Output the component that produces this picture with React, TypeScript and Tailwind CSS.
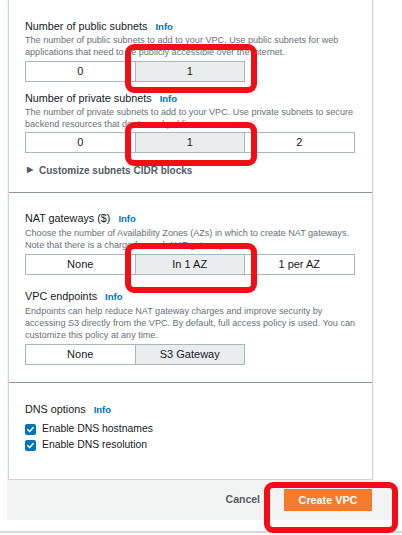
import React from 'react';

const font = { fontFamily: '"Liberation Sans", Arial, sans-serif' };

const Info = () => (
  <span className="ml-[8px] text-[9.5px] font-bold text-[#0073bb]">Info</span>
);

const Label = ({ children }: { children: React.ReactNode }) => (
  <div className="flex items-baseline h-[14px] leading-[14px] text-[10.8px] text-[#16191f] whitespace-nowrap">
    {children}
  </div>
);

const Desc = ({ lines }: { lines: string[] }) => (
  <div className="text-[9.1px] leading-[12px] text-[#687078] whitespace-nowrap">
    {lines.map((l) => (
      <div key={l}>{l}</div>
    ))}
  </div>
);

const Segmented = ({ options, selected }: { options: string[]; selected: number }) => (
  <div className="flex">
    {options.map((o, i) => (
      <div
        key={o}
        className={`w-[110.5px] h-[21px] flex items-center justify-center text-[11px] text-[#16191f] border border-[#aab7b8] ${
          i > 0 ? '-ml-px' : ''
        } ${i === selected ? 'bg-[#eaeded]' : 'bg-white'}`}
      >
        {o}
      </div>
    ))}
  </div>
);

const Check = ({ label }: { label: string }) => (
  <div className="flex items-center h-[16px]">
    <span className="w-[11px] h-[11px] rounded-[2px] bg-[#0073bb] flex items-center justify-center">
      <svg width="9" height="9" viewBox="0 0 10 10" fill="none">
        <path d="M2 5.2 L4.2 7.3 L8 2.8" stroke="white" strokeWidth="1.7" strokeLinecap="round" strokeLinejoin="round" />
      </svg>
    </span>
    <span className="ml-[6px] text-[10.4px] text-[#16191f]">{label}</span>
  </div>
);

const RedBox = ({ className }: { className: string }) => (
  <div className={`absolute border-[6px] border-[#f20d17] rounded-[9px] pointer-events-none ${className}`} />
);

export default function App() {
  return (
    <div className="relative w-[402px] h-[535px] bg-white overflow-hidden" style={font}>
      {/* card */}
      <div className="ml-[8px] w-[365px] bg-white border-x border-b border-[#cfd5d6] shadow-[0_1px_1px_rgba(0,28,36,0.3)]">
        <div className="px-[16px] pt-[19px]">
          <Label>
            Number of public subnets <Info />
          </Label>
          <div className="mt-px">
            <Desc
              lines={[
                'The number of public subnets to add to your VPC. Use public subnets for web',
                'applications that need to be publicly accessible over the internet.',
              ]}
            />
          </div>
          <div className="mt-[3px]">
            <Segmented options={['0', '1']} selected={1} />
          </div>
          <div className="mt-[9px]">
            <Label>
              Number of private subnets <Info />
            </Label>
          </div>
          <div className="mt-px">
            <Desc
              lines={[
                'The number of private subnets to add to your VPC. Use private subnets to secure',
                "backend resources that don't need public access.",
              ]}
            />
          </div>
          <div className="mt-[2px]">
            <Segmented options={['0', '1', '2']} selected={1} />
          </div>
          <div className="mt-[10px] h-[14px] flex items-center text-[10px] font-bold text-[#545b64] whitespace-nowrap">
            <span className="text-[8px] mr-[6px] ml-[2px] text-[#545b64]">▶</span>
            Customize subnets CIDR blocks
          </div>
          <div className="h-[15px]" />
        </div>
        <div className="h-px bg-[#8d9596]" />

        <div className="px-[16px] pt-[18px] pb-[17px]">
          <Label>
            NAT gateways ($) <Info />
          </Label>
          <div className="mt-[2px]">
            <Desc
              lines={[
                'Choose the number of Availability Zones (AZs) in which to create NAT gateways.',
                'Note that there is a charge for each NAT gateway.',
              ]}
            />
          </div>
          <div className="mt-[3px]">
            <Segmented options={['None', 'In 1 AZ', '1 per AZ']} selected={1} />
          </div>
          <div className="mt-[14px]">
            <Label>
              VPC endpoints <Info />
            </Label>
          </div>
          <div className="mt-[2px]">
            <Desc
              lines={[
                'Endpoints can help reduce NAT gateway charges and improve security by',
                'accessing S3 directly from the VPC. By default, full access policy is used. You can',
                'customize this policy at any time.',
              ]}
            />
          </div>
          <div className="mt-[3px]">
            <Segmented options={['None', 'S3 Gateway']} selected={1} />
          </div>
        </div>
        <div className="h-px bg-[#8d9596]" />

        <div className="px-[16px] pt-[19px] pb-[26px]">
          <Label>
            DNS options <Info />
          </Label>
          <div className="mt-[5px]">
            <Check label="Enable DNS hostnames" />
            <Check label="Enable DNS resolution" />
          </div>
        </div>
      </div>

      {/* footer */}
      <div className="ml-[7px] w-[385px] h-[40px] bg-[#f2f3f3] flex items-center justify-end pr-[20px] gap-[24px]">
        <span className="text-[10.5px] font-bold text-[#545b64]">Cancel</span>
        <div className="w-[88px] h-[22px] bg-[#f47b2b] flex items-center justify-center text-[10.8px] font-bold text-white">
          Create VPC
        </div>
      </div>
      <div className="mt-[11px] h-[2px] bg-[#d5d8d8]" />

      {/* annotations */}
      <RedBox className="left-[125px] top-[44px] w-[132px] h-[49px]" />
      <RedBox className="left-[125px] top-[122px] w-[132px] h-[44px]" />
      <RedBox className="left-[125px] top-[243px] w-[132px] h-[50px]" />
      <RedBox className="left-[264px] top-[482px] w-[134px] h-[51px]" />
    </div>
  );
}
